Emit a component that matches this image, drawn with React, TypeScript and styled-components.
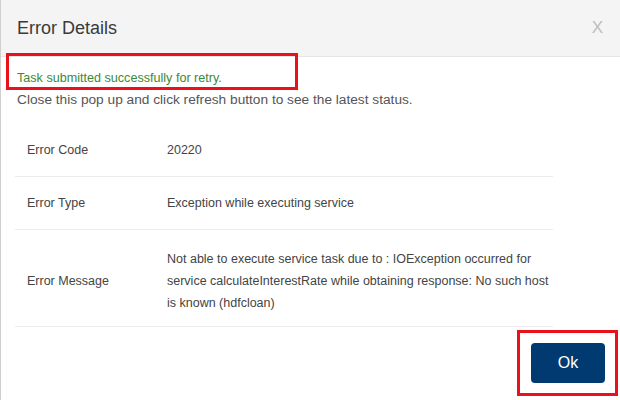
import React from "react";
import styled, { createGlobalStyle } from "styled-components";

const Global = createGlobalStyle`
  html, body { margin: 0; padding: 0; background: #fff; }
  body { width: 620px; height: 400px; overflow: hidden; font-family: "Liberation Sans", Arial, sans-serif; }
`;

const Dialog = styled.div`
  position: relative;
  width: 620px;
  height: 400px;
  box-sizing: border-box;
  border-left: 1px solid #cfcfcf;
  background: #fff;
  display: flex;
  flex-direction: column;
`;

const Header = styled.div`
  height: 57px;
  box-sizing: border-box;
  background: #f4f4f4;
  border-bottom: 1px solid #e6e6e6;
  display: flex;
  align-items: center;
  justify-content: space-between;
  padding: 0 17px 0 16px;
`;

const Title = styled.h2`
  margin: 0;
  font-size: 18px;
  font-weight: 400;
  color: #3a3a3a;
`;

const Close = styled.span`
  font-size: 17px;
  color: #bdbdbd;
  margin-right: 0;
`;

const Body = styled.div`
  padding: 11px 0 0 16px;
`;

const Msg = styled.p<{ $success?: boolean }>`
  margin: 0;
  font-size: ${(p) => (p.$success ? "12.6px" : "13.7px")};
  line-height: 21px;
  color: ${(p) => (p.$success ? "#3a8a3a" : "#555")};
`;

const Table = styled.div`
  margin: 14px 0 0 -2px;
  width: 538px;
`;

const Row = styled.div<{ $shift?: number }>`
  display: grid;
  grid-template-columns: 152px 1fr;
  align-items: center;
  padding: ${(p) => 15 + (p.$shift ?? 0)}px 0 ${(p) => 15 - (p.$shift ?? 0)}px;
  border-bottom: 1px solid #ececec;
  font-size: 12.5px;
  line-height: 22px;
  color: #444;
`;

const Label = styled.div`
  padding-left: 12px;
`;

const Value = styled.div`
  padding-right: 0;
`;

const Footer = styled.div`
  display: flex;
  justify-content: flex-end;
  padding: 16px 15px 0 0;
`;

const OkButton = styled.button`
  width: 74px;
  height: 40px;
  border: none;
  border-radius: 4px;
  background: #003a70;
  color: #fff;
  font-family: inherit;
  font-size: 16px;
`;

const Highlight = styled.div<{ $x: number; $y: number; $w: number; $h: number }>`
  position: absolute;
  left: ${(p) => p.$x}px;
  top: ${(p) => p.$y}px;
  width: ${(p) => p.$w}px;
  height: ${(p) => p.$h}px;
  box-sizing: border-box;
  border: 3px solid #e8111c;
  pointer-events: none;
`;

const rows = [
  { label: "Error Code", value: "20220", shift: 0 },
  { label: "Error Type", value: "Exception while executing service", shift: 0 },
  {
    label: "Error Message",
    value:
      "Not able to execute service task due to : IOException occurred for service calculateInterestRate while obtaining response: No such host is known (hdfcloan)",
    shift: 3,
  },
];

export default function App() {
  return (
    <>
      <Global />
      <Dialog>
        <Header>
          <Title>Error Details</Title>
          <Close>X</Close>
        </Header>
        <Body>
          <Msg $success>Task submitted successfully for retry.</Msg>
          <Msg>Close this pop up and click refresh button to see the latest status.</Msg>
          <Table>
            {rows.map((r) => (
              <Row key={r.label} $shift={r.shift}>
                <Label>{r.label}</Label>
                <Value>{r.value}</Value>
              </Row>
            ))}
          </Table>
        </Body>
        <Footer>
          <OkButton>Ok</OkButton>
        </Footer>
        <Highlight $x={5} $y={53} $w={292} $h={37} />
        <Highlight $x={516} $y={330} $w={101} $h={66} />
      </Dialog>
    </>
  );
}
